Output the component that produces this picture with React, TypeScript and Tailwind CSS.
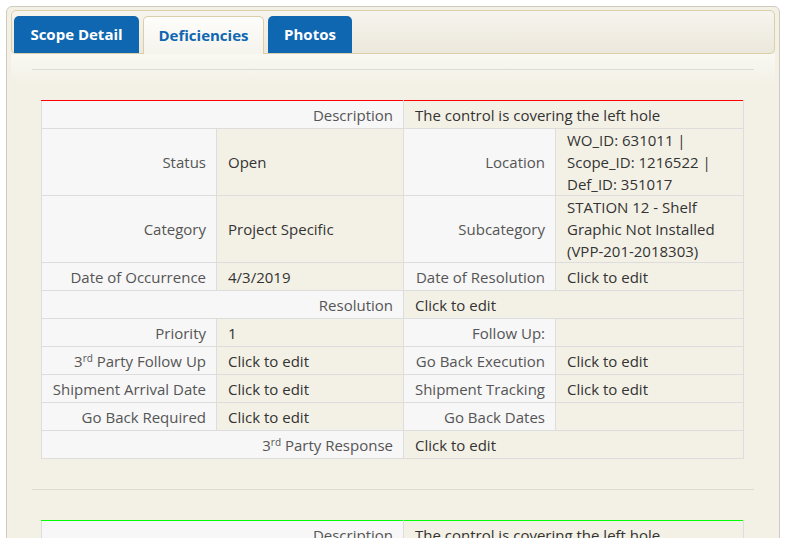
const font = { fontFamily: '"Open Sans", "Noto Sans", sans-serif' };

type CellProps = { children?: React.ReactNode; span?: number; top?: string };

function Label({ children, span, top = "" }: CellProps) {
  return (
    <td
      colSpan={span}
      className={`h-[28px] border border-[#dddddd] bg-[#f7f7f7] py-0 pr-[10px] pl-2 text-right align-middle text-[#555555] ${top}`}
    >
      {children}
    </td>
  );
}

function Value({ children, span, top = "" }: CellProps) {
  return (
    <td
      colSpan={span}
      className={`h-[28px] border border-[#dddddd] bg-[#f3f1e6] py-0 pr-2 pl-[11px] align-middle text-[#333333] ${top}`}
    >
      {children}
    </td>
  );
}

const third = (
  <>
    3<sup className="text-[10px]">rd</sup>
  </>
);

function DeficiencyTable({ accent }: { accent: string }) {
  return (
    <table className="w-[702px] table-fixed border-collapse text-[15px] leading-[22px]">
      <colgroup>
        <col className="w-[175px]" />
        <col className="w-[187px]" />
        <col className="w-[152px]" />
        <col className="w-[188px]" />
      </colgroup>
      <tbody>
        <tr>
          <Label span={2} top={accent}>
            Description
          </Label>
          <Value span={2} top={accent}>
            The control is covering the left hole
          </Value>
        </tr>
        <tr>
          <Label>Status</Label>
          <Value>Open</Value>
          <Label>Location</Label>
          <Value>
            WO_ID: 631011 |<br />
            Scope_ID: 1216522 |<br />
            Def_ID: 351017
          </Value>
        </tr>
        <tr>
          <Label>Category</Label>
          <Value>Project Specific</Value>
          <Label>Subcategory</Label>
          <Value>
            STATION 12 - Shelf Graphic Not Installed (VPP-201-2018303)
          </Value>
        </tr>
        <tr>
          <Label>Date of Occurrence</Label>
          <Value>4/3/2019</Value>
          <Label>Date of Resolution</Label>
          <Value>Click to edit</Value>
        </tr>
        <tr>
          <Label span={2}>Resolution</Label>
          <Value span={2}>Click to edit</Value>
        </tr>
        <tr>
          <Label>Priority</Label>
          <Value>1</Value>
          <Label>Follow Up:</Label>
          <Value />
        </tr>
        <tr>
          <Label>{third} Party Follow Up</Label>
          <Value>Click to edit</Value>
          <Label>Go Back Execution</Label>
          <Value>Click to edit</Value>
        </tr>
        <tr>
          <Label>Shipment Arrival Date</Label>
          <Value>Click to edit</Value>
          <Label>Shipment Tracking</Label>
          <Value>Click to edit</Value>
        </tr>
        <tr>
          <Label>Go Back Required</Label>
          <Value>Click to edit</Value>
          <Label>Go Back Dates</Label>
          <Value />
        </tr>
        <tr>
          <Label span={2}>{third} Party Response</Label>
          <Value span={2}>Click to edit</Value>
        </tr>
      </tbody>
    </table>
  );
}

export default function App() {
  return (
    <div className="h-[538px] overflow-hidden bg-white pt-[6px] pl-[6px]" style={font}>
      <div className="h-[560px] w-[774px] rounded-[6px] border border-[#cfcbc0] bg-[#f3f1e6] px-1 pt-[3px]">
        {/* tab bar */}
        <div className="flex h-[44px] items-end gap-[4px] rounded-[5px] border border-[#d9cfa9] bg-gradient-to-b from-[#f6f4ee] to-[#ece8dc] pl-[2px]">
          <div className="flex h-[37px] w-[125px] items-center justify-center rounded-t-[5px] bg-[#0f66b1] text-[15px] font-bold text-white">
            Scope Detail
          </div>
          <div className="-mb-px flex h-[38px] w-[121px] items-center justify-center rounded-t-[5px] border border-b-0 border-[#d9cfa9] bg-gradient-to-b from-[#fdfdfb] to-[#f5f3ec] text-[15px] font-bold text-[#0f66b1]">
            Deficiencies
          </div>
          <div className="flex h-[37px] w-[84px] items-center justify-center rounded-t-[5px] bg-[#0f66b1] text-[15px] font-bold text-white">
            Photos
          </div>
        </div>

        {/* content */}
        <div className="bg-gradient-to-b from-[#f9f8f2] to-[#f3f1e6] to-[30px] px-[21px] pt-[15px]">
          <div className="border-t border-[#dcdad3]" />
          <div className="flex flex-col items-start px-[9px] pt-[30px]">
            <DeficiencyTable accent="border-t-[#ff0000]" />
          </div>
          <div className="mt-[30px] border-t border-[#dcdad3]" />
          <div className="flex flex-col items-start px-[9px] pt-[30px]">
            <DeficiencyTable accent="border-t-[#00ff00]" />
          </div>
        </div>
      </div>
    </div>
  );
}
